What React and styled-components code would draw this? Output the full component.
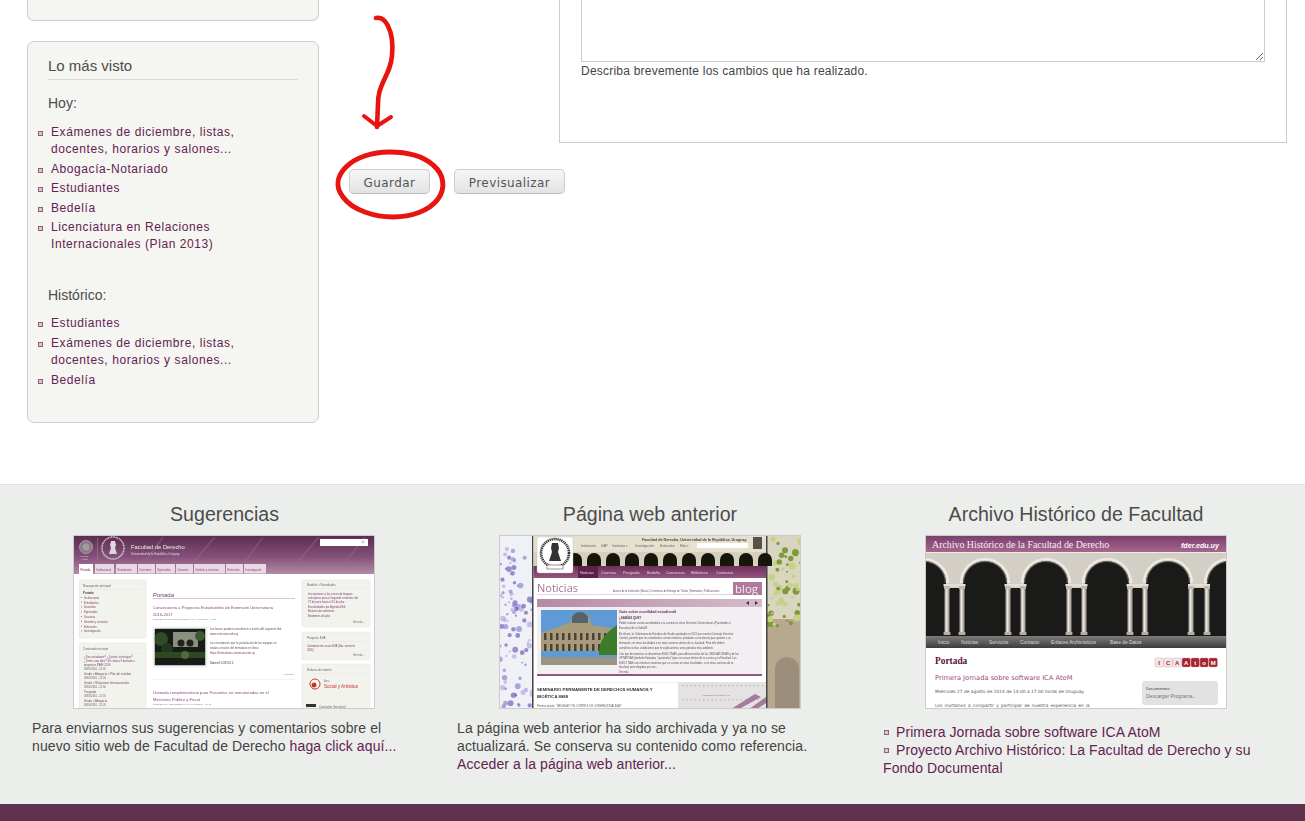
import React from 'react';
import styled, { createGlobalStyle } from 'styled-components';

const GlobalStyle = createGlobalStyle`
  html, body {
    margin: 0;
    padding: 0;
    background: #fff;
    font-family: 'Liberation Sans', Arial, sans-serif;
    color: #444;
  }
  #root {
    height: 821px;
    overflow: hidden;
  }
`;

const Main = styled.div`
  position: relative;
  display: flex;
  height: 484px;
  box-sizing: border-box;
`;

const Sidebar = styled.aside`
  width: 292px;
  margin-left: 27px;
  flex-shrink: 0;
`;

const CutCard = styled.div`
  height: 21px;
  box-sizing: border-box;
  background: #f5f5f1;
  border: 1px solid #ccc;
  border-top: none;
  border-radius: 0 0 7px 7px;
`;

const Card = styled.section`
  margin-top: 20px;
  height: 382px;
  box-sizing: border-box;
  padding: 15px 20px 0 20px;
  background: #f5f5f1;
  border: 1px solid #ccc;
  border-radius: 7px;
`;

const CardTitle = styled.h2`
  margin: 0;
  padding-bottom: 4px;
  height: 18px;
  font-size: 15px;
  line-height: 18px;
  font-weight: normal;
  color: #4c4c4c;
  border-bottom: 1px solid #d8d8d4;
`;

const Period = styled.p`
  margin: ${(p) => p.$top}px 0 0;
  font-size: 14px;
  line-height: 18px;
  color: #4c4c4c;
`;

const SideList = styled.ul`
  list-style: none;
  margin: ${(p) => p.$top}px 0 0 -10px;
  padding: 0;
  width: 210px;
`;

const SideItem = styled.li`
  display: grid;
  grid-template-columns: 13px 1fr;
  margin-bottom: 2.6px;
  font-size: 12px;
  line-height: 17px;
  letter-spacing: 0.58px;

  &::before {
    content: '';
    width: 3px;
    height: 3px;
    margin-top: 7px;
    background: #d9c8d4;
    border: 1px solid #8b5f80;
  }
`;

const Link = styled.a`
  color: #632252;
  text-decoration: none;
`;

const Content = styled.div`
  flex: 1;
  display: flex;
  flex-direction: column;
`;

const Fieldset = styled.div`
  width: 728px;
  height: 143px;
  margin-left: 240px;
  padding-left: 21px;
  box-sizing: border-box;
  border: 1px solid #ccc;
  border-top: none;
`;

const TextArea = styled.textarea`
  display: block;
  width: 684px;
  height: 62px;
  box-sizing: border-box;
  margin: 0;
  padding: 0;
  border: 1px solid #ccc;
  border-top: none;
  outline: none;
  resize: vertical;
  background: #fff;
`;

const Help = styled.div`
  margin-top: 2px;
  font-size: 12px;
  line-height: 14px;
  letter-spacing: 0.22px;
  color: #444;
`;

const Actions = styled.div`
  display: flex;
  gap: 24px;
  margin-top: 26px;
  padding-left: 30px;
`;

const Button = styled.button`
  width: ${(p) => p.$w}px;
  height: 25px;
  box-sizing: border-box;
  padding: 2px 0 0;
  font-family: 'DejaVu Sans', Verdana, sans-serif;
  font-size: 12px;
  letter-spacing: 0.41px;
  color: #555;
  background: linear-gradient(#f6f6f6, #e3e3e3);
  border: 1px solid #ccc;
  border-bottom-color: #bbb;
  border-radius: 5px;
`;

const Marks = styled.svg`
  position: absolute;
  left: 330px;
  top: 10px;
  pointer-events: none;
`;

const Band = styled.footer`
  height: 320px;
  box-sizing: border-box;
  padding-left: 11px;
  display: grid;
  grid-template-columns: repeat(3, 426px);
  background: #eceeeb;
  border-top: 1px solid #dfe1de;
`;

const Column = styled.div`
  padding: 16px 20px 0 ${(p) => p.$left}px;
`;

const ColumnTitle = styled.h3`
  margin: 0;
  height: 34px;
  font-size: 19.6px;
  line-height: 26px;
  font-weight: normal;
  text-align: center;
  color: #4c4c4c;
`;

const Shot = styled.svg`
  display: block;
  width: 302px;
  height: 174px;
  margin-left: ${(p) => p.$left}px;
  background: #fff;
  outline: 1px solid #ccc;
  outline-offset: -1px;
`;

const Blurb = styled.p`
  margin: 10px 0 0;
  font-size: 14px;
  line-height: 18px;
  letter-spacing: 0.1px;
  color: #444;
`;

const LinkList = styled.ul`
  list-style: none;
  margin: 14px 0 0;
  padding: 0;
  font-size: 14px;
  line-height: 18px;
  letter-spacing: 0.08px;
`;

const LinkItem = styled.li`
  &::before {
    content: '';
    display: inline-block;
    width: 3px;
    height: 3px;
    margin: 0 7px 2px 1px;
    background: #d9c8d4;
    border: 1px solid #8b5f80;
  }
`;

const BottomBar = styled.div`
  height: 17px;
  background: #5f3350;
`;

const SANS = 'Liberation Sans, Arial, sans-serif';

const Card1 = ({ x, y, w, h }) => (
  <rect x={x} y={y} width={w} height={h} rx="1.5" fill="#f3f3ee" stroke="#e2e2dd" strokeWidth="0.5" />
);

const Line = ({ x, y, size = 2.85, fill = '#555', weight, children }) => (
  <text x={x} y={y} fontSize={size} fill={fill} fontWeight={weight} fontFamily={SANS}>{children}</text>
);

const TABS = [
  [22, 19, 'Institucional'], [43, 21, 'Estudiantes'], [65, 17, 'Docentes'], [83, 19, 'Egresados'],
  [103, 17, 'Usuarios'], [121, 31, 'Gestión y servicios'], [153, 17, 'Extensión'], [171, 22, 'Investigación'],
];

const NAV = ['Institucional', 'Estudiantes', 'Docentes', 'Egresados', 'Usuarios', 'Gestión y servicios', 'Extensión', 'Investigación'];

const SiteShot = () => (
  <Shot $left={41} viewBox="0 0 302 174">
    <defs>
      <linearGradient id="headA" x1="0" y1="0" x2="0" y2="1">
        <stop offset="0" stopColor="#5c2c4e" />
        <stop offset="0.55" stopColor="#84517a" />
        <stop offset="1" stopColor="#b48aa8" />
      </linearGradient>
      <filter id="soft"><feGaussianBlur stdDeviation="0.22" /></filter>
      <filter id="softPhoto"><feGaussianBlur stdDeviation="0.7" /></filter>
    </defs>
    <g filter="url(#soft)">
      <rect x="1" y="1" width="300" height="38" fill="url(#headA)" />
      <g stroke="#9a6b8f" strokeWidth="1.5" opacity="0.45">
        <path d="M70 30L90 2M118 30L142 2M170 30L190 2M222 30L246 2M270 30L292 2" />
      </g>
      <circle cx="13" cy="12" r="6.5" fill="#8a7a84" stroke="#c9bcc5" strokeWidth="0.6" />
      <circle cx="13" cy="12" r="3.5" fill="#a59aa0" />
      <Line x={7} y={22} size={1.6} fill="#ddd">Área Social</Line>
      <Line x={8} y={25} size={1.6} fill="#ddd">y Artística</Line>
      <rect x="24" y="3" width="0.5" height="22" fill="#a98ba2" />
      <circle cx="40" cy="13" r="11" fill="none" stroke="#d9cfd6" strokeWidth="1.6" strokeDasharray="1 .6" />
      <path d="M38 6h4l1 4-1 3 2 6h-8l2-6-1-3z" fill="#ded6dc" />
      <Line x={58} y={14} size={5.8} fill="#f2eaf0">Facultad de Derecho</Line>
      <Line x={58} y={19.5} size={2.9} fill="#e2d3de">Universidad de la República, Uruguay</Line>
      <rect x="247" y="4" width="48" height="7" fill="#fff" />
      <circle cx="290" cy="7" r="1" fill="none" stroke="#777" strokeWidth="0.4" />
      <rect x="6" y="29" width="14" height="10" fill="#fff" />
      <Line x={7.5} y={35.5} size={2.8} fill="#5b2a4c">Portada</Line>
      {TABS.map(([x, w, label]) => (
        <g key={label}>
          <rect x={x} y="29" width={w} height="9.5" fill="#ead9e4" />
          <Line x={x + 1.5} y={35.5} size={2.75} fill="#7a4a6c">{label}</Line>
        </g>
      ))}

      <Card1 x={6} y={45} w={67} h={58} />
      <Line x={10} y={52} size={3} fill="#666">Navegación principal</Line>
      <rect x="10" y="54" width="59" height="0.4" fill="#ddd" />
      <Line x={10} y={59} weight="bold" fill="#444">Portada</Line>
      {NAV.map((label, i) => (
        <g key={label}>
          <rect x="8" y={61.9 + i * 4.8} width="0.9" height="0.9" fill="#8a5b7c" />
          <Line x={11} y={63.8 + i * 4.8} fill="#7b3e6a">{label}</Line>
        </g>
      ))}
      <Card1 x={6} y={108} w={67} h={66} />
      <Line x={10} y={115} size={3} fill="#666">Contenido reciente</Line>
      <rect x="10" y="118" width="59" height="0.4" fill="#ddd" />
      <Line x={11} y={123} fill="#7b3e6a">¿Sos estudiante? ¿Querés investigar?</Line>
      <Line x={11} y={127} fill="#7b3e6a">¿Tenés una idea? ¡Es ahora! Llamado a</Line>
      <Line x={11} y={131} fill="#7b3e6a">proyectos PAIE 2016</Line>
      <Line x={11} y={135} size={2.6} fill="#666">08/09/2016 - 15:30</Line>
      <Line x={11} y={140} fill="#7b3e6a">Grado &gt; Abogacía &gt; Plan de estudios</Line>
      <Line x={11} y={144} size={2.6} fill="#666">08/09/2016 - 12:56</Line>
      <Line x={11} y={149} fill="#7b3e6a">Grado &gt; Relaciones Internacionales</Line>
      <Line x={11} y={153} size={2.6} fill="#666">08/09/2016 - 12:50</Line>
      <Line x={11} y={158} fill="#7b3e6a">Posgrado</Line>
      <Line x={11} y={162} size={2.6} fill="#666">08/09/2016 - 12:35</Line>
      <Line x={11} y={167} fill="#7b3e6a">Grado &gt; Abogacía</Line>
      <Line x={11} y={171} size={2.6} fill="#666">08/09/2016 - 12:26</Line>

      <Line x={80} y={62} size={6} fill="#6d3a5e">Portada</Line>
      <rect x="80" y="63.5" width="142" height="0.5" fill="#b08aa6" />
      <Line x={80} y={74} size={4.1} fill="#8a4a78">Convocatoria a Proyectos Estudiantiles de Extensión Universitaria</Line>
      <Line x={80} y={80.5} size={4.1} fill="#8a4a78">2016-2017</Line>
      <Line x={80} y={85} size={2.4} fill="#777">Publicado por proyecto.extension el Vie, 09/09/2016 - 09:29</Line>
      <rect x="80" y="92" width="54" height="40" fill="#f6f6f6" stroke="#ddd" strokeWidth="0.5" />
      <svg x="81.5" y="93.5" width="51" height="37" viewBox="81.5 93.5 51 37">
        <g filter="url(#softPhoto)">
          <rect x="81.5" y="93.5" width="51" height="37" fill="#141a12" />
          <rect x="100" y="97" width="25" height="15" fill="#8a8f80" />
          <circle cx="108" cy="108" r="3.5" fill="#20241c" />
          <circle cx="117" cy="108" r="3.5" fill="#20241c" />
          <circle cx="88" cy="104" r="7" fill="#30492a" />
          <circle cx="94" cy="114" r="6" fill="#24381f" />
          <circle cx="127" cy="101" r="5" fill="#3c5a30" />
          <rect x="82" y="117" width="50" height="6" fill="#2f4a24" />
          <circle cx="112" cy="120" r="4" fill="#51683f" />
        </g>
      </svg>
      <Line x={137} y={95} fill="#555">Las bases pueden consultarse a través del siguiente link:</Line>
      <Line x={137} y={100} fill="#7b3e6a">www.extension.edu.uy</Line>
      <Line x={137} y={109} fill="#555">Los inscriptores que la postulación de los equipos se</Line>
      <Line x={137} y={114} fill="#555">realiza a través del formulario en línea:</Line>
      <Line x={137} y={119} fill="#7b3e6a">https://formularios.extension.edu.uy</Line>
      <Line x={137} y={129} fill="#555" weight="bold">Cierre:</Line>
      <Line x={146} y={129} fill="#555">15/09/2016</Line>
      <Line x={211} y={140} size={2.5} fill="#666">Ver más</Line>
      <rect x="80" y="144" width="142" height="0.4" fill="#ddd" />
      <Line x={80} y={159} size={4.1} fill="#8a4a78">Llamado complementario para Pasantías no remuneradas en el</Line>
      <Line x={80} y={165.5} size={4.1} fill="#8a4a78">Ministerio Público y Fiscal</Line>
      <Line x={80} y={170} size={2.4} fill="#777">Publicado por Administrador el Vie, 09/09/2016 - 07:43</Line>

      <Card1 x={229} y={45} w={68} h={47} />
      <Line x={234} y={51} size={3} fill="#666">Bedelía &gt; Novedades</Line>
      <rect x="234" y="53.5" width="59" height="0.4" fill="#ddd" />
      <Line x={235} y={60} size={2.7} fill="#7b3e6a">Inscripciones a los cursos de lenguas</Line>
      <Line x={235} y={64} size={2.7} fill="#7b3e6a">extranjeras para el segundo semestre: del</Line>
      <Line x={235} y={68} size={2.7} fill="#7b3e6a">27 de junio hasta el 15 de julio</Line>
      <Line x={235} y={73} size={2.7} fill="#7b3e6a">Escolaridades por Agenda Web</Line>
      <Line x={235} y={77} size={2.7} fill="#7b3e6a">Muestra de exámenes</Line>
      <Line x={235} y={82} size={2.7} fill="#7b3e6a">Exámenes de julio</Line>
      <Line x={280} y={88} size={2.6} fill="#666">Ver más...</Line>
      <Card1 x={229} y={97} w={68} h={28} />
      <Line x={234} y={104} size={3} fill="#666">Proyecto EVA</Line>
      <rect x="234" y="106.5" width="59" height="0.4" fill="#ddd" />
      <Line x={234} y={112} size={2.6} fill="#7b3e6a">Calendario de cursos EVA (2do. semestre</Line>
      <Line x={234} y={116} size={2.6} fill="#7b3e6a">2016)</Line>
      <Line x={280} y={121} size={2.6} fill="#666">Ver más...</Line>
      <Card1 x={229} y={129} w={68} h={45} />
      <Line x={234} y={136} size={3} fill="#666">Enlaces de interés</Line>
      <rect x="234" y="138.5" width="59" height="0.4" fill="#ddd" />
      <circle cx="242" cy="149" r="5" fill="#fff" stroke="#c9342c" strokeWidth="1" />
      <circle cx="241" cy="150" r="2.5" fill="#c9342c" />
      <Line x={251} y={147} size={2.6} fill="#777">Área</Line>
      <Line x={251} y={153} size={4.6} fill="#c9342c">Social y Artística</Line>
      <Line x={246} y={173} size={3.2} fill="#666">Comisión Sectorial</Line>
      <rect x="233" y="169" width="10" height="3" fill="#333" />
    </g>
  </Shot>
);

const seq = (n, f) => Array.from({ length: n }, (_, i) => f(i));
const rnd = (i) => {
  const v = Math.sin(i * 12.9898) * 43758.5453;
  return v - Math.floor(v);
};
const blossoms = seq(90, (i) => ({
  x: 1 + rnd(i) * 32,
  y: 14 + rnd(i + 500) * 158,
  r: 0.8 + rnd(i + 900) * 2.2,
  c: i % 3 === 0 ? '#8f83d6' : i % 3 === 1 ? '#b3aae6' : '#6f63bc',
}));
const leaves = seq(60, (i) => ({
  x: 268 + rnd(i + 1300) * 34,
  y: 1 + rnd(i + 1700) * 90,
  r: 1 + rnd(i + 2100) * 2.6,
  c: i % 2 ? '#7f9a3e' : '#c5d184',
}));
const arches = seq(12, (i) => 57 + i * 19);
const dots = seq(40, (i) => ({ x: 183 + (i % 20) * 4.2, y: 150 + Math.floor(i / 20) * 14 }));
const TOPNAV = [['Institución', 82], ['UAP', 102], ['Institutos ▾', 113], ['Investigación', 136], ['Extensión', 161], ['Más ▾', 181]];

const OldSiteShot = () => (
  <Shot $left={42} viewBox="0 0 302 174">
    <defs>
      <linearGradient id="navB" x1="0" y1="0" x2="0" y2="1">
        <stop offset="0" stopColor="#6d2f5c" />
        <stop offset="1" stopColor="#94567f" />
      </linearGradient>
      <linearGradient id="barB" x1="0" y1="0" x2="1" y2="0">
        <stop offset="0" stopColor="#b48aa6" />
        <stop offset="1" stopColor="#d4bccb" />
      </linearGradient>
      <filter id="softB"><feGaussianBlur stdDeviation="0.25" /></filter>
      <filter id="softTree"><feGaussianBlur stdDeviation="0.7" /></filter>
    </defs>
    <g filter="url(#softTree)">
      <rect x="0" y="0" width="34" height="174" fill="#f0f1f6" />
      {blossoms.map((b, i) => <circle key={i} cx={b.x} cy={b.y} r={b.r} fill={b.c} opacity="0.7" />)}
      <rect x="267" y="0" width="35" height="174" fill="#d9d5bf" />
      <rect x="267" y="84" width="35" height="90" fill="#b8a890" />
      <path d="M276 174v-40a12 12 0 0 1 24 0v40z" fill="#9b8f7b" />
      {leaves.map((b, i) => <circle key={i} cx={b.x} cy={b.y} r={b.r} fill={b.c} />)}
    </g>
    <g filter="url(#softB)">
      <rect x="34" y="1" width="233" height="173" fill="#fff" />
      <rect x="33" y="1" width="1.5" height="172" fill="#444" />
      <rect x="267" y="1" width="1.5" height="172" fill="#444" />
      <rect x="34.5" y="1" width="232.5" height="17" fill="#e6e0cf" />
      <rect x="34.5" y="17" width="232.5" height="15" fill="#d8d0bc" />
      {arches.map((x) => (
        <path key={x} d={`M${x - 7} 31v-6a7 7 0 0 1 14 0v6z`} fill="#15130f" />
      ))}
      <rect x="34.5" y="31" width="232.5" height="12" fill="url(#navB)" />
      <rect x="79" y="31" width="20" height="12" fill="#5a2249" />
      <Line x={143} y={5.5} size={3.7} weight="bold" fill="#444">Facultad de Derecho, Universidad de la República, Uruguay</Line>
      {TOPNAV.map(([label, x]) => (
        <Line key={label} x={x} y={12} size={3.3} fill="#666">{label}</Line>
      ))}
      <rect x="198" y="8" width="51" height="5" fill="#fff" />
      <rect x="254" y="2" width="9" height="12" fill="#56514a" />
      <rect x="38" y="2" width="36" height="36" rx="2" fill="#fff" stroke="#bbb" strokeWidth="0.4" />
      <circle cx="56" cy="18" r="14" fill="none" stroke="#333" strokeWidth="2.6" strokeDasharray="1.3 .7" />
      <path d="M53 8h6l1 5-1 4 3 9H50l3-9-1-4z" fill="#333" />
      <rect x="48" y="30" width="16" height="4" fill="#fff" stroke="#333" strokeWidth="0.5" />
      {['Noticias', 'Carreras', 'Posgrado', 'Bedelía', 'Concursos', 'Biblioteca', 'Contactos'].map((label, i) => (
        <Line key={label} x={[81, 102, 124, 148, 167, 192, 217][i]} y={38.5} size={3.9} fill="#e6d3e0">{label}</Line>
      ))}
      <text x="38" y="57" fontSize="11" fill="#a5749a" fontFamily="Open Sans, sans-serif">Noticias</text>
      <rect x="38" y="59.5" width="196" height="0.5" fill="#c9a9bf" />
      <Line x={114} y={57} size={2.55} fill="#7b3e6a">Acerca de la Institución | Becas | Ceremonia de Entrega de Títulos | Normativa | Publicaciones</Line>
      <rect x="234" y="47" width="29" height="13" fill="#b07aa0" />
      <text x="236" y="57.5" fontSize="11.5" fill="#f3e8f0" fontFamily="Open Sans, sans-serif">blog</text>
      <rect x="38" y="64" width="225" height="8" fill="url(#barB)" />
      <path d="M247 68l3-2v4zM256 66l3 2-3 2z" fill="#5a2249" />
      <rect x="38" y="72" width="225" height="69" fill="#f3eef1" />
      <rect x="38" y="139" width="225" height="2" fill="#8a5a7c" />
      <rect x="42" y="75" width="76" height="60" fill="#5d9ad6" />
      <path d="M42 98l28-10 4-6a9 9 0 0 1 16 0l3 8 25 4v22H42z" fill="#a89b7c" />
      <path d="M73 82a9 9 0 0 1 16 0v6H73z" fill="#55646a" />
      {seq(11, (i) => <rect key={i} x={45 + i * 6} y="98" width="2.5" height="7" fill="#4b4335" />)}
      {seq(11, (i) => <rect key={i} x={45 + i * 6} y="109" width="2.5" height="7" fill="#4b4335" />)}
      <path d="M100 120c0-18 10-24 18-30v30z" fill="#3c7a2c" />
      <rect x="42" y="122" width="76" height="13" fill="#9a9484" />
      <rect x="42" y="130" width="76" height="5" fill="#f1f1f1" />
      <Line x={120} y={78} size={3.7} weight="bold" fill="#6d2f5c">Guía sobre movilidad estudiantil</Line>
      <Line x={120} y={84} size={3} weight="bold" fill="#444">¿SABÍAS QUE?</Line>
      {['Podés realizar cursos acreditables a tu carrera en otros Servicios Universitarios (Facultades o',
        'Escuelas) de la UdelaR.',
        'En efecto, la Ordenanza de Estudios de Grado aprobada en 2011 por nuestro Consejo Directivo',
        'Central, permite que los estudiantes cursen materias (unidades curriculares) que aporten a su',
        'formación, en otras facultades o en otras carreras dentro de su facultad. Para ello deben',
        'cumplirse ciertas condiciones que te explicaremos unos párrafos más adelante.',
        'Con tipo de materias se denominan ELECTIVAS, para diferenciarlas de las OBLIGATORIAS y de las',
        'OPTATIVAS (también llamadas "opcionales") que se cursan dentro de tu carrera y tu Facultad. Las',
        'ELECTIVAS son entonces materias que se cursan en otras facultades, o en otras carreras de tu',
        'facultad, pero elegidas por vos...'].map((t, i) => (
        <Line key={t} x={120} y={89 + i * 4.6 + (i > 1 ? 1.5 : 0) + (i > 5 ? 1.5 : 0)} size={2.7} fill="#555">{t}</Line>
      ))}
      <Line x={120} y={138} size={2.6} fill="#7b3e6a">Ver más</Line>
      <rect x="38" y="147" width="225" height="0.4" fill="#ddd" />
      <rect x="179" y="147" width="88" height="27" fill="#e4e2e3" />
      {dots.map((d, i) => <rect key={i} x={d.x} y={d.y} width="1.4" height="1.4" fill="#bdbbbc" />)}
      <Line x={203} y={161} size={2} fill="#777">Actualización: 01/09/2016, 9:46</Line>
      <path d="M232 174l24-15 6 3-22 12zM250 174l17-12v6l-9 6z" fill="#a77a9c" />
      <Line x={38} y={156} size={4.3} weight="bold" fill="#333">SEMINARIO PERMANENTE DE DERECHOS HUMANOS Y</Line>
      <Line x={38} y={162.5} size={4.3} weight="bold" fill="#333">BIOÉTICA 8888</Line>
      <Line x={38} y={172} size={2.6} fill="#555">Primera sesión: &quot;URUGUAY Y EL CONTROL DE CONVENCIONALIDAD&quot;</Line>
    </g>
  </Shot>
);

const columnsAt = [22, 37, 83, 98, 144, 159, 205, 220, 266, 282];
const openingsAt = [-1, 60, 121, 182, 243, 304];
const ICA = [['I', 0], ['C', 0], ['A', 0], ['A', 1], ['t', 1], ['o', 1], ['M', 1]];

const ArchiveShot = () => (
  <Shot $left={42} viewBox="0 0 302 174">
    <defs>
      <linearGradient id="headC" x1="0" y1="0" x2="0" y2="1">
        <stop offset="0" stopColor="#7b3f6c" />
        <stop offset="1" stopColor="#a6668f" />
      </linearGradient>
      <linearGradient id="navC" x1="0" y1="0" x2="0" y2="1">
        <stop offset="0" stopColor="#7e7b7c" />
        <stop offset="1" stopColor="#3e3b3c" />
      </linearGradient>
      <linearGradient id="col" x1="0" y1="0" x2="1" y2="0">
        <stop offset="0" stopColor="#8c8880" />
        <stop offset="0.4" stopColor="#ece8e0" />
        <stop offset="1" stopColor="#8a867e" />
      </linearGradient>
    </defs>
    <rect x="1" y="1" width="300" height="16" fill="url(#headC)" />
    <text x="7" y="13" fontSize="9.9" fill="#f5ecf2" fontFamily="Liberation Serif, serif">Archivo Histórico de la Facultad de Derecho</text>
    <text x="256" y="12.5" fontSize="7.1" fontWeight="bold" fontStyle="italic" fill="#fff" fontFamily={SANS}>fder.edu.uy</text>
    <rect x="1" y="17" width="300" height="37" fill="#d4cfc6" />
    <rect x="1" y="17" width="300" height="1" fill="#f0ece4" />
    <rect x="1" y="53" width="300" height="48" fill="#1a1a18" />
    {openingsAt.map((x) => (
      <g key={x}>
        <path d={`M${x - 22} 54v-6a22 22 0 0 1 44 0v6z`} fill="#1a1a18" />
        <path d={`M${x - 24} 48a24 24 0 0 1 48 0`} fill="none" stroke="#efebe3" strokeWidth="2.2" />
        <path d={`M${x - 21.5} 48a21.5 21.5 0 0 1 43 0`} fill="none" stroke="#8d887f" strokeWidth="0.7" />
      </g>
    ))}
    {[29.5, 90.5, 151.5, 212.5, 274].map((x) => (
      <rect key={x} x={x - 11} y="49" width="22" height="2.5" fill="#e4e0d8" />
    ))}
    {columnsAt.map((x) => (
      <g key={x}>
        <rect x={x - 3} y="51" width="6" height="3" fill="#bdb8af" />
        <rect x={x - 2.6} y="54" width="5.2" height="43" fill="url(#col)" />
        <rect x={x - 3.4} y="97" width="6.8" height="3" fill="#b5b0a7" />
      </g>
    ))}
    <rect x="1" y="101" width="300" height="12" fill="url(#navC)" />
    {[['Inicio', 13], ['Noticias', 36], ['Servicios', 64], ['Contacto', 95], ['Enlaces Archivísticos', 126], ['Base de Datos', 185]].map(([label, x]) => (
      <Line key={label} x={x} y={109} size={4.8} fill="#dcdcdc">{label}</Line>
    ))}
    <text x="10" y="129" fontSize="9.4" fontWeight="bold" fill="#5a1040" fontFamily="Liberation Serif, serif">Portada</text>
    {ICA.map(([c, red], i) => (
      <g key={i}>
        <rect x={230 + i * 9} y="123" width="8.4" height="9" rx="1.4" fill={red ? '#a8232f' : '#f2e6e6'} stroke="#c9a0a0" strokeWidth="0.4" />
        <text x={234.2 + i * 9} y="130" fontSize="6" fontWeight="bold" textAnchor="middle" fill={red ? '#fff' : '#a8232f'} fontFamily={SANS}>{c}</text>
      </g>
    ))}
    <text x="10" y="144.5" fontSize="6.7" fill="#9a4a80" fontFamily="DejaVu Sans, sans-serif">Primera Jornada sobre software ICA AtoM</text>
    <text x="10" y="157.5" fontSize="4.37" fill="#555" fontFamily="DejaVu Sans, sans-serif">Miércoles 27 de agosto de 2014 de 14:00 a 17:00 horas de Uruguay.</text>
    <text x="10" y="171.5" fontSize="4.37" fill="#555" fontFamily="DejaVu Sans, sans-serif" wordSpacing="0.8">Los invitamos a compartir y participar de nuestra experiencia en la</text>
    <rect x="217" y="146" width="76" height="24" rx="3" fill="#e2e2e2" />
    <Line x={221} y={155} size={4.2} fill="#444">Documentos:</Line>
    <Line x={221} y={163} size={5} fill="#777">Descargar Programa...</Line>
  </Shot>
);

const App = () => (
  <>
    <GlobalStyle />
    <Main>
      <Sidebar>
        <CutCard />
        <Card>
          <CardTitle>Lo más visto</CardTitle>
          <Period $top={14}>Hoy:</Period>
          <SideList $top={12}>
            <SideItem><Link href="#">Exámenes de diciembre, listas, docentes, horarios y salones...</Link></SideItem>
            <SideItem><Link href="#">Abogacía-Notariado</Link></SideItem>
            <SideItem><Link href="#">Estudiantes</Link></SideItem>
            <SideItem><Link href="#">Bedelía</Link></SideItem>
            <SideItem><Link href="#">Licenciatura en Relaciones Internacionales (Plan 2013)</Link></SideItem>
          </SideList>
          <Period $top={33}>Histórico:</Period>
          <SideList $top={11}>
            <SideItem><Link href="#">Estudiantes</Link></SideItem>
            <SideItem><Link href="#">Exámenes de diciembre, listas, docentes, horarios y salones...</Link></SideItem>
            <SideItem><Link href="#">Bedelía</Link></SideItem>
          </SideList>
        </Card>
      </Sidebar>
      <Content>
        <Fieldset>
          <TextArea />
          <Help>Describa brevemente los cambios que ha realizado.</Help>
        </Fieldset>
        <Actions>
          <Button $w={81}>Guardar</Button>
          <Button $w={111}>Previsualizar</Button>
        </Actions>
      </Content>
      <Marks width="120" height="215" viewBox="330 10 120 215" fill="none" stroke="#e8140f" strokeLinecap="round" strokeLinejoin="round">
        <path strokeWidth="4.6" d="M376 18c5-1 9 2 12 8 4 8 5 20 4 30-1 10-4 16-8 24-4 9-6 14-6 24l-1 23" />
        <path strokeWidth="4" d="M364 116l13 10 14-9" />
        <path strokeWidth="5" d="M389 152c-16 0-33 5-43 15-9 9-11 20-3 30 10 14 33 20 50 20 18 0 36-6 45-18 8-11 6-25-5-34-11-10-28-13-44-13z" />
      </Marks>
    </Main>
    <Band>
      <Column $left={21}>
        <ColumnTitle>Sugerencias</ColumnTitle>
        <SiteShot />
        <Blurb>Para enviarnos sus sugerencias y comentarios sobre el nuevo sitio web de Facultad de Derecho <Link href="#">haga click aquí...</Link></Blurb>
      </Column>
      <Column $left={20}>
        <ColumnTitle>Página web anterior</ColumnTitle>
        <OldSiteShot />
        <Blurb>La página web anterior ha sido archivada y ya no se actualizará. Se conserva su contenido como referencia. <Link href="#">Acceder a la página web anterior...</Link></Blurb>
      </Column>
      <Column $left={20}>
        <ColumnTitle>Archivo Histórico de Facultad</ColumnTitle>
        <ArchiveShot />
        <LinkList>
          <LinkItem><Link href="#">Primera Jornada sobre software ICA AtoM</Link></LinkItem>
          <LinkItem><Link href="#">Proyecto Archivo Histórico: La Facultad de Derecho y su Fondo Documental</Link></LinkItem>
        </LinkList>
      </Column>
    </Band>
    <BottomBar />
  </>
);

export default App;
